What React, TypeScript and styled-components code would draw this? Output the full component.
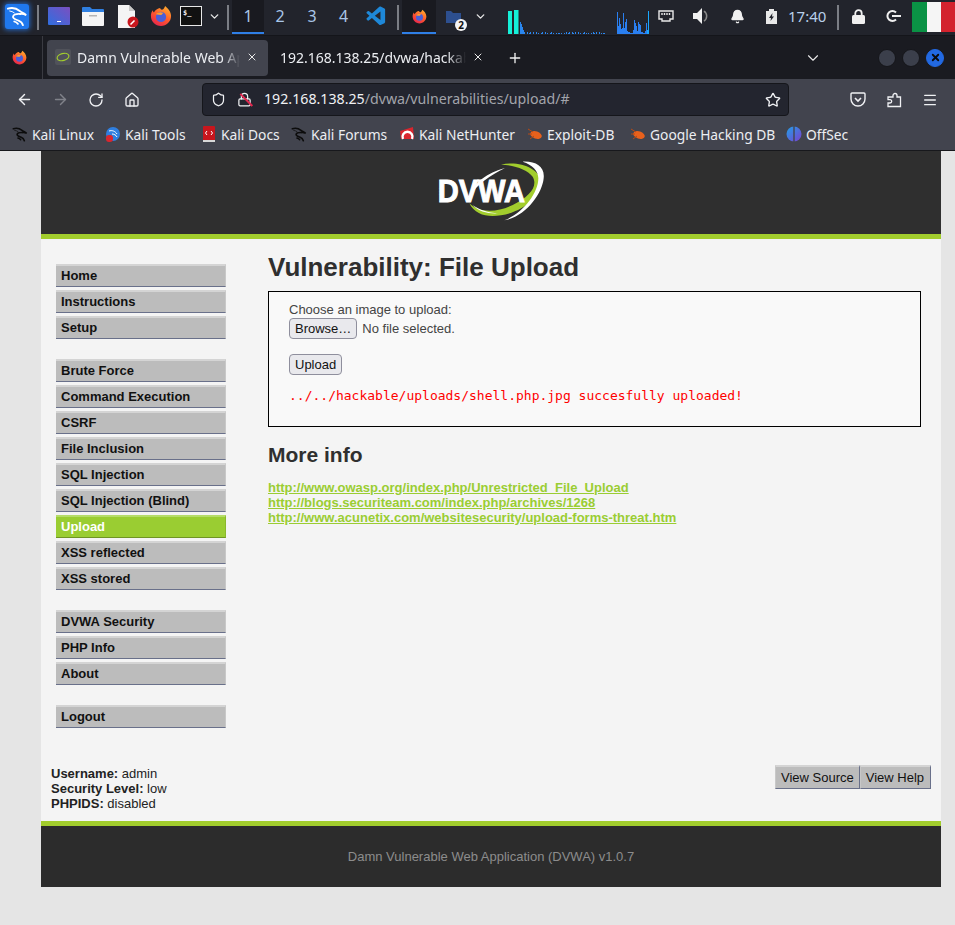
import React from "react";
import styled, { createGlobalStyle } from "styled-components";
import {
  ArrowLeft,
  ArrowRight,
  Bell,
  ChevronDown,
  Home,
  Lock,
  Menu,
  Plus,
  RotateCw,
  Shield,
  Star,
  X,
} from "lucide-react";
import { VscVscode } from "react-icons/vsc";

const GlobalStyle = createGlobalStyle`
  html, body {
    margin: 0;
    padding: 0;
    background: #e5e5e5;
  }
  * { box-sizing: border-box; }
`;

const Screen = styled.div`
  width: 955px;
  height: 925px;
  overflow: hidden;
  background: #e5e5e5;
`;

/* desktop panel */
const Panel = styled.div`
  display: flex;
  height: 36px;
  background: #22242c;
  border-bottom: 1px solid #14151a;
  color: #d8dee9;
  font-family: "Noto Sans", sans-serif;
`;

const Slot = styled.div<{ $w: number; $active?: boolean; $dark?: boolean }>`
  flex: 0 0 ${(p) => p.$w}px;
  height: 34px;
  display: flex;
  align-items: center;
  justify-content: center;
  position: relative;
  font-size: 16px;
  color: #a9c6e8;
  background: ${(p) => (p.$dark ? "#191a20" : "transparent")};
  border-bottom: ${(p) => (p.$active ? "2px solid #2f7fe6" : "2px solid transparent")};
`;

const KaliTile = styled.div`
  width: 24px;
  height: 25px;
  display: flex;
  align-items: center;
  justify-content: center;
  border-radius: 3px;
  background: #1f78ee;
  box-shadow: 0 0 5px 1px rgba(40, 130, 255, 0.7);
`;

const GraphSlot = styled.div`
  flex: 0 0 142px;
  height: 34px;
  display: flex;
  align-items: flex-end;
`;

const PanelSep = styled.div<{ $ml?: number }>`
  flex: 0 0 8px;
  margin-left: ${(p) => p.$ml ?? 0}px;
  display: flex;
  justify-content: center;
  align-items: center;
  height: 34px;
  &::after {
    content: "";
    width: 2px;
    height: 25px;
    background: #7b7e85;
  }
`;

const Clock = styled.span`
  font-size: 15px;
  color: #b9d0ea;
`;

const Badge = styled.span`
  position: absolute;
  left: 19px;
  top: 19px;
  width: 12px;
  height: 12px;
  border-radius: 50%;
  background: #f4f4f4;
  color: #111;
  font-size: 10px;
  font-weight: 700;
  line-height: 12px;
  text-align: center;
`;

const Flag = styled.div`
  flex: 0 0 43px;
  height: 30px;
  margin: 2px 0 0 0;
  display: flex;
`;

const FlagBand = styled.div<{ $c: string }>`
  flex: 1;
  background: ${(p) => p.$c};
`;

/* firefox tab strip */
const TabStrip = styled.div`
  display: flex;
  align-items: center;
  height: 43px;
  background: #1a1b21;
  color: #eceef2;
  font-family: "Noto Sans", sans-serif;
  font-size: 14px;
`;

const AppButton = styled.div`
  flex: 0 0 43px;
  height: 43px;
  display: flex;
  align-items: center;
  justify-content: center;
  padding-right: 3px;
  border-right: 1px solid #3a3b42;
`;

const Tab = styled.div<{ $active?: boolean }>`
  flex: 0 0 221px;
  min-width: 0;
  height: 36px;
  margin-left: ${(p) => (p.$active ? 4 : 0)}px;
  padding: 0 ${(p) => (p.$active ? 10 : 5)}px 1px ${(p) => (p.$active ? 8 : 12)}px;
  display: flex;
  align-items: center;
  gap: 6px;
  border-radius: 4px;
  background: ${(p) => (p.$active ? "#42444e" : "transparent")};
`;

const TabTitle = styled.span`
  flex: 1;
  min-width: 0;
  white-space: nowrap;
  overflow: hidden;
  -webkit-mask-image: linear-gradient(to right, #000 90%, transparent);
  mask-image: linear-gradient(to right, #000 90%, transparent);
`;

const Favicon = styled.div`
  flex: 0 0 16px;
  height: 16px;
  background: #50525a;
  border-radius: 2px;
  display: flex;
  align-items: center;
  justify-content: center;
`;

const NewTab = styled.div`
  margin-left: 16px;
  width: 20px;
  display: flex;
  justify-content: center;
`;

const TabList = styled.div`
  margin-left: 278px;
  width: 20px;
  display: flex;
  justify-content: center;
`;

const WindowButtons = styled.div`
  margin-left: 55px;
  display: flex;
  gap: 6px;
`;

const WindowDot = styled.div<{ $close?: boolean }>`
  width: 18px;
  height: 18px;
  border-radius: 50%;
  display: flex;
  align-items: center;
  justify-content: center;
  background: ${(p) => (p.$close ? "#2269e2" : "#3b3f4b")};
  border: 1px solid ${(p) => (p.$close ? "#2269e2" : "#15161a")};
`;

/* toolbar */
const Toolbar = styled.div`
  display: flex;
  align-items: center;
  height: 41px;
  background: #42444e;
  color: #f0f1f4;
  font-family: "Noto Sans", sans-serif;
  font-size: 14.2px;
`;

const ToolButton = styled.div<{ $w: number; $off?: boolean }>`
  flex: 0 0 ${(p) => p.$w}px;
  display: flex;
  justify-content: center;
  align-items: center;
  color: ${(p) => (p.$off ? "#80828a" : "#f0f1f4")};
`;

const UrlBar = styled.div`
  flex: 0 0 587px;
  height: 33px;
  margin: 0 51px 0 53px;
  padding: 0 7px 0 8px;
  display: flex;
  align-items: center;
  background: #23252f;
  border: 1px solid #15161b;
  border-radius: 4px;
`;

const UrlIcon = styled.div<{ $w: number }>`
  flex: 0 0 ${(p) => p.$w}px;
  display: flex;
  align-items: center;
  position: relative;
`;

const UrlText = styled.div`
  flex: 1;
  padding-bottom: 2px;
  white-space: nowrap;
  color: #f0f1f4;
  span {
    color: #a2a4ab;
  }
`;

const Strike = styled.div`
  position: absolute;
  left: 1px;
  top: 7px;
  width: 17px;
  height: 1.5px;
  background: #e22850;
  transform: rotate(45deg);
`;

/* bookmarks */
const Bookmarks = styled.div`
  display: flex;
  align-items: center;
  height: 31px;
  padding: 0 0 2px 12px;
  background: #42444e;
  color: #eceef2;
  font-family: "Noto Sans", sans-serif;
  font-size: 13.8px;
  border-bottom: 1px solid #17181c;
`;

const Bookmark = styled.div<{ $w: number }>`
  flex: 0 0 ${(p) => p.$w}px;
  display: flex;
  align-items: center;
  gap: 4px;
  white-space: nowrap;
`;

/* dvwa page */
const Page = styled.div`
  width: 900px;
  margin-left: 41px;
  font-family: "Liberation Sans", Arial, sans-serif;
  font-size: 13px;
  color: #2f2f2f;
`;

const Header = styled.div`
  height: 88px;
  padding-top: 9px;
  background: #2f2f2f;
  border-bottom: 5px solid #a2cd2d;
  display: flex;
  justify-content: center;
  align-items: flex-start;
`;

const Main = styled.div`
  height: 582px;
  padding: 14px 20px 0 15px;
  background: #f4f4f4;
`;

const Columns = styled.div`
  display: flex;
  height: 512px;
`;

const SideMenu = styled.div`
  flex: 0 0 170px;
  margin-right: 42px;
  padding-top: 11px;
`;

const MenuGroup = styled.div`
  display: flex;
  flex-direction: column;
  gap: 3px;
  margin-bottom: 20px;
`;

const MenuItem = styled.div<{ $selected?: boolean }>`
  height: 23px;
  padding-left: 5px;
  line-height: 19px;
  font-weight: 700;
  color: ${(p) => (p.$selected ? "#fff" : "#111")};
  background: ${(p) => (p.$selected ? "#9acd32" : "#bcbcbc")};
  border-top: 2px solid ${(p) => (p.$selected ? "#b5dc68" : "#d4d4d4")};
  border-right: 1px solid ${(p) => (p.$selected ? "#8ab82c" : "#c8c8c8")};
  border-bottom: 1px solid ${(p) => (p.$selected ? "#6f9424" : "#69708a")};
`;

const Content = styled.div`
  flex: 1;
`;

const Title = styled.h1`
  margin: 0 0 10px;
  font-size: 26px;
  line-height: 28px;
  font-weight: 700;
`;

const UploadBox = styled.div`
  height: 136px;
  padding: 10px 20px;
  background: #f9f9f9;
  border: 1px solid #000;
  color: #444;
`;

const BoxLabel = styled.div`
  line-height: 15px;
`;

const FileRow = styled.div`
  display: flex;
  align-items: center;
  gap: 5px;
  margin-bottom: 15px;
  height: 22px;
`;

const FormButton = styled.div`
  display: inline-flex;
  align-items: center;
  height: 21px;
  padding: 0 5px;
  color: #111;
  background: #e9e9ed;
  border: 1px solid #8f8f9d;
  border-radius: 4px;
`;

const Message = styled.pre`
  margin: 13px 0 0;
  font-family: "DejaVu Sans Mono", monospace;
  font-size: 13px;
  line-height: 15px;
  color: #f00;
`;

const SubTitle = styled.h2`
  margin: 16px 0 13px;
  font-size: 21px;
  line-height: 24px;
  font-weight: 700;
`;

const LinkList = styled.div`
  display: flex;
  flex-direction: column;
`;

const MoreLink = styled.a`
  font-weight: 700;
  line-height: 15px;
  color: #9acd32;
  text-decoration: underline;
`;

const Status = styled.div`
  display: flex;
  justify-content: space-between;
  margin-left: -5px;
  line-height: 15px;
  color: #222;
  b {
    font-weight: 700;
  }
`;

const StatusText = styled.div`
  padding-top: 1px;
`;

const SourceButtons = styled.div`
  display: flex;
  margin-right: -10px;
  height: 24px;
`;

const SourceButton = styled.div`
  height: 24px;
  padding: 0 5px;
  line-height: 21px;
  color: #111;
  background: #bcbcbc;
  border-top: 2px solid #d4d4d4;
  border-left: 1px solid #c8c8c8;
  border-right: 1px solid #69708a;
  border-bottom: 1px solid #69708a;
  &:last-child {
    padding-right: 6px;
  }
`;

const Footer = styled.div`
  height: 66px;
  padding-top: 23px;
  background: #2c2c2c;
  border-top: 5px solid #a2cd2d;
  text-align: center;
  color: #8c8c8c;
`;

/* drawn icons */
const KaliDragon: React.FC<{ size: number; color?: string; weight?: number }> = ({ size, color = "#fff", weight = 2 }) => (
  <svg width={size} height={size} viewBox="0 0 24 24" fill="none" stroke={color} strokeWidth={weight} strokeLinecap="round">
    <path d="M2 4c5-1.500 10 0 13 2.500 2 1.700 4.500 2 7 4.500-2.500-1.200-4.800-1.500-6.500-1.200" />
    <path d="M15.500 9.800c-3.500-.2-7 .3-7.800 2.700-.7 2.300 2.800 3.300 6 4.500 2.500 1 4 2.300 4.800 5" />
    <path d="M13 20.500c-1.200-1.400-2.500-2-4-2.500" />
    <path d="M4 6.500c2 .3 3.500 1 5 2" strokeWidth="1" />
  </svg>
);

const FirefoxLogo: React.FC<{ size: number }> = ({ size }) => (
  <svg width={size} height={size} viewBox="0 0 24 24">
    <defs>
      <linearGradient id="ffx" x1="0.8" y1="0" x2="0.2" y2="1">
        <stop offset="0" stopColor="#ffb02e" />
        <stop offset="0.5" stopColor="#ff5a2c" />
        <stop offset="1" stopColor="#e5214f" />
      </linearGradient>
    </defs>
    <path d="M12 23C5.800 23 1 18 1 12c0-2.500.8-4.700 2-6.300.2 1.200.7 2 1.300 2.500C5.500 5.500 8.500 3.500 11 3.300 12 6 14.500 6.200 16.500 1c3 2.500 6.500 6 6.500 11 0 6-5 11-11 11z" fill="url(#ffx)" />
    <circle cx="12" cy="13" r="5.600" fill="#4a5fd8" />
    <path d="M6.400 10c2-2 5-2.800 8.200-1.400-1 .6-1.800 1.300-2.100 2.200-1.500.2-3.500-.2-6.100-.8z" fill="#ff9a2e" />
  </svg>
);

const Graph: React.FC = () => {
  const fade = [12, 10, 7, 4, 2];
  const dots = [27, 29, 30, 33, 36, 38, 41, 42, 45, 47, 50, 51, 53, 56, 58, 59, 61, 64, 66, 68, 69, 72, 73, 75, 78, 80, 83, 84, 86, 88, 91, 93, 94, 96, 99, 101, 103, 104];
  const right = [22, 8, 16, 10, 5, 6, 21, 6, 12, 15, 3, 2, 2, 1, 1, 1, 4, 14, 11, 8, 3, 12, 10, 9, 2, 2, 1, 1, 3, 11, 4, 23];
  return (
    <svg width="142" height="24" viewBox="0 0 142 24">
      <rect x="1" y="1" width="4" height="23" fill="#14f0d8" />
      <rect x="7" y="0" width="4.500" height="24" fill="#14f0d8" />
      {fade.map((h, i) => (
        <rect key={i} x={13 + i} y={24 - h} width="1" height={h} fill="#2a86ee" />
      ))}
      {dots.map((x) => (
        <rect key={x} x={x - 7} y={x % 3 === 0 ? 22 : 23} width="1" height={x % 3 === 0 ? 2 : 1} fill="#2a86ee" />
      ))}
      {right.map((h, i) => (
        <rect key={"r" + i} x={110 + i} y={24 - h} width="1" height={h} fill={i > 29 ? "#19a8ff" : "#2a7ff0"} />
      ))}
    </svg>
  );
};

const Bug: React.FC = () => (
  <svg width="16" height="16" viewBox="0 0 16 16" fill="#e8611c">
    <ellipse cx="9" cy="9" rx="6" ry="3.600" transform="rotate(18 9 9)" />
    <path d="M1 3l5 3M1 8l4 0M3 13l4-3" stroke="#b74a15" strokeWidth="1" />
  </svg>
);

const menuGroups = [
  ["Home", "Instructions", "Setup"],
  ["Brute Force", "Command Execution", "CSRF", "File Inclusion", "SQL Injection", "SQL Injection (Blind)", "Upload", "XSS reflected", "XSS stored"],
  ["DVWA Security", "PHP Info", "About"],
  ["Logout"],
];

const links = [
  "http://www.owasp.org/index.php/Unrestricted_File_Upload",
  "http://blogs.securiteam.com/index.php/archives/1268",
  "http://www.acunetix.com/websitesecurity/upload-forms-threat.htm",
];

const App: React.FC = () => {
  return (
    <Screen>
      <GlobalStyle />
      <Panel>
        <Slot $w={34}>
          <KaliTile>
            <KaliDragon size={22} />
          </KaliTile>
        </Slot>
        <PanelSep />
        <Slot $w={34}>
          <svg width="22" height="18" viewBox="0 0 22 18">
            <defs>
              <linearGradient id="win" x1="0" y1="1" x2="1" y2="0">
                <stop offset="0" stopColor="#2f6fe0" />
                <stop offset="1" stopColor="#7b4fc0" />
              </linearGradient>
            </defs>
            <rect width="22" height="18" rx="1" fill="url(#win)" />
            <rect x="9" y="14" width="4" height="1" fill="#fff" />
          </svg>
        </Slot>
        <Slot $w={34}>
          <svg width="22" height="20" viewBox="0 0 22 20">
            <path d="M0 2a1 1 0 0 1 1-1h7l2 2h11a1 1 0 0 1 1 1v3H0z" fill="#2f7fe0" />
            <path d="M0 6h22v13a1 1 0 0 1-1 1H1a1 1 0 0 1-1-1z" fill="#f4f4f4" />
            <rect x="7" y="9" width="8" height="1.500" fill="#b4b4b4" />
          </svg>
        </Slot>
        <Slot $w={36}>
          <svg width="22" height="23" viewBox="0 0 22 23">
            <path d="M1 0h11l6 6v17H1z" fill="#f4f4f4" />
            <path d="M12 0l6 6h-6z" fill="#c8c8c8" />
            <circle cx="16" cy="17" r="5.500" fill="#c8161d" />
            <path d="M13.500 19.500l4-4" stroke="#fff" strokeWidth="1.600" />
          </svg>
        </Slot>
        <Slot $w={30}>
          <FirefoxLogo size={22} />
        </Slot>
        <Slot $w={30}>
          <svg width="22" height="20" viewBox="0 0 22 20">
            <rect x=".5" y=".5" width="21" height="19" fill="#111" stroke="#e8e8e8" />
            <text x="3" y="9" fontSize="7" fontFamily="DejaVu Sans Mono" fontWeight="700" fill="#eee">$_</text>
          </svg>
        </Slot>
        <Slot $w={16}>
          <ChevronDown size={13} color="#e8e8e8" strokeWidth={2.5} />
        </Slot>
        <PanelSep $ml={2} />
        <Slot $w={32} $active $dark>1</Slot>
        <Slot $w={32}>2</Slot>
        <Slot $w={32}>3</Slot>
        <Slot $w={31}>4</Slot>
        <Slot $w={35}>
          <VscVscode size={23} color="#1e88d8" />
        </Slot>
        <PanelSep />
        <Slot $w={34} $active $dark>
          <FirefoxLogo size={15} />
        </Slot>
        <Slot $w={34}>
          <svg width="15" height="13" viewBox="0 0 15 13" fill="#2d4f8f">
            <path d="M0 1h5l2 2h8v10H0z" />
          </svg>
          <Badge>2</Badge>
        </Slot>
        <Slot $w={20}>
          <ChevronDown size={13} color="#e8e8e8" strokeWidth={2.5} />
        </Slot>
        <Slot $w={17} />
        <GraphSlot>
          <Graph />
        </GraphSlot>
        <Slot $w={1} />
        <Slot $w={32}>
          <svg width="16" height="13" viewBox="0 0 16 13" fill="none" stroke="#e8e8e8" strokeWidth="1.400">
            <path d="M1 1h14v8h-3v2H4V9H1z" />
            <path d="M4 3v2M6.500 3v2M9 3v2M11.500 3v2" />
          </svg>
        </Slot>
        <Slot $w={4} />
        <Slot $w={32}>
          <svg width="18" height="16" viewBox="0 0 18 16">
            <path d="M0 5h4l5-5v16l-5-5H0z" fill="#f0f0f0" />
            <path d="M11 3a6 6 0 0 1 0 10" stroke="#8a8a8a" strokeWidth="1.500" fill="none" />
          </svg>
        </Slot>
        <Slot $w={2} />
        <Slot $w={34}>
          <Bell size={15} color="#f0f0f0" fill="#f0f0f0" />
        </Slot>
        <Slot $w={34}>
          <svg width="11" height="15" viewBox="0 0 11 15">
            <path d="M3 0h5v2h3v13H0V2h3z" fill="#e8e8e8" />
            <path d="M6.500 4L3 9h2l-.5 3L8 7.500H6z" fill="#22242c" />
          </svg>
        </Slot>
        <Slot $w={38}>
          <Clock>17:40</Clock>
        </Slot>
        <Slot $w={8} />
        <PanelSep />
        <Slot $w={32}>
          <svg width="13" height="15" viewBox="0 0 13 15">
            <path d="M3.300 7V4.300a3.200 3.200 0 0 1 6.400 0V7" fill="none" stroke="#f0f0f0" strokeWidth="1.800" />
            <rect y="6" width="13" height="9" rx="1.500" fill="#f0f0f0" />
          </svg>
        </Slot>
        <Slot $w={4} />
        <Slot $w={32}>
          <svg width="16" height="12" viewBox="0 0 16 12" fill="none" stroke="#f0f0f0" strokeWidth="2">
            <path d="M10 2.500A5 5 0 1 0 10 9.500M6 6h9" />
          </svg>
        </Slot>
        <Slot $w={2} />
        <Flag>
          <FlagBand $c="#0a9245" />
          <FlagBand $c="#f5f5f5" />
          <FlagBand $c="#d3232e" />
        </Flag>
      </Panel>

      <TabStrip>
        <AppButton>
          <FirefoxLogo size={15} />
        </AppButton>
        <Tab $active>
          <Favicon>
            <svg width="14" height="10" viewBox="0 0 14 10" fill="none" stroke="#a2cd2d" strokeWidth="1.200">
              <ellipse cx="7" cy="5" rx="6" ry="3.500" transform="rotate(-15 7 5)" />
            </svg>
          </Favicon>
          <TabTitle>Damn Vulnerable Web App</TabTitle>
          <X size={12} color="#e8e8e8" />
        </Tab>
        <Tab>
          <TabTitle>192.168.138.25/dvwa/hackabl</TabTitle>
          <X size={12} color="#e8e8e8" />
        </Tab>
        <NewTab>
          <Plus size={16} color="#f0f0f0" />
        </NewTab>
        <TabList>
          <ChevronDown size={18} color="#e8e8e8" strokeWidth={1.5} />
        </TabList>
        <WindowButtons>
          <WindowDot />
          <WindowDot />
          <WindowDot $close>
            <X size={11} color="#0b0b0b" strokeWidth={4} />
          </WindowDot>
        </WindowButtons>
      </TabStrip>

      <Toolbar>
        <ToolButton $w={6} />
        <ToolButton $w={36}><ArrowLeft size={17} /></ToolButton>
        <ToolButton $w={36} $off><ArrowRight size={17} /></ToolButton>
        <ToolButton $w={36}><RotateCw size={16} /></ToolButton>
        <ToolButton $w={35}><Home size={16} /></ToolButton>
        <UrlBar>
          <UrlIcon $w={26}><Shield size={15} /></UrlIcon>
          <UrlIcon $w={27}>
            <Lock size={15} />
            <Strike />
          </UrlIcon>
          <UrlText>
            192.168.138.25<span>/dvwa/vulnerabilities/upload/#</span>
          </UrlText>
          <Star size={16} />
        </UrlBar>
        <ToolButton $w={36}>
          <svg width="16" height="15" viewBox="0 0 16 15" fill="none" stroke="#f0f1f4" strokeWidth="1.400">
            <path d="M2 1h12a1 1 0 0 1 1 1v5a7 7 0 0 1-14 0V2a1 1 0 0 1 1-1z" />
            <path d="M5 6l3 3 3-3" strokeWidth="1.600" />
          </svg>
        </ToolButton>
        <ToolButton $w={36}>
          <svg width="16" height="16" viewBox="0 0 16 16" fill="none" stroke="#f0f1f4" strokeWidth="1.300">
            <path d="M7 5V3.500a2 2 0 0 1 4 0V5h3.500v9.500H2V11h2a1.700 1.700 0 0 0 0-3.400H2V5z" />
          </svg>
        </ToolButton>
        <ToolButton $w={36}><Menu size={16} /></ToolButton>
      </Toolbar>

      <Bookmarks>
        <Bookmark $w={93}><KaliDragon size={16} color="#0c0c0c" weight={2.4} />Kali Linux</Bookmark>
        <Bookmark $w={96}>
          <svg width="16" height="16" viewBox="0 0 16 16">
            <circle cx="8" cy="8" r="7" fill="#2f7fe0" />
            <path d="M4 5c3-1 6 0 8 3M7 8c2 0 4 1 5 3" stroke="#fff" fill="none" />
            <rect x="1" y="9" width="7" height="7" rx="3" fill="#d9262e" />
          </svg>
          Kali Tools
        </Bookmark>
        <Bookmark $w={90}>
          <svg width="16" height="16" viewBox="0 0 16 16">
            <rect x="2" y="0" width="12" height="15" rx="1" fill="#c8161d" />
            <rect x="2" y="14" width="12" height="2" fill="#d8d8d8" />
            <path d="M6 5L4.500 7 6 9M10 5l1.500 2L10 9" stroke="#fff" fill="none" />
          </svg>
          Kali Docs
        </Bookmark>
        <Bookmark $w={108}><KaliDragon size={16} color="#0c0c0c" weight={2.4} />Kali Forums</Bookmark>
        <Bookmark $w={128}>
          <svg width="16" height="16" viewBox="0 0 16 16">
            <path d="M1 5l13-4 1 12H2z" fill="#d9262e" />
            <path d="M4 13a5 5 0 1 1 9 0" stroke="#fff" strokeWidth="2.400" fill="none" />
          </svg>
          Kali NetHunter
        </Bookmark>
        <Bookmark $w={103}><Bug />Exploit-DB</Bookmark>
        <Bookmark $w={156}><Bug />Google Hacking DB</Bookmark>
        <Bookmark $w={70}>
          <svg width="16" height="16" viewBox="0 0 16 16">
            <defs>
              <linearGradient id="off" x1="0" y1="0" x2="1" y2="1">
                <stop offset="0" stopColor="#20a0e8" />
                <stop offset="1" stopColor="#7a3fd0" />
              </linearGradient>
            </defs>
            <circle cx="8" cy="8" r="7.500" fill="url(#off)" />
            <rect x="7.300" y="0" width="1.400" height="16" fill="#42444e" />
          </svg>
          OffSec
        </Bookmark>
      </Bookmarks>

      <Page>
        <Header>
          <svg width="110" height="70" viewBox="105 30 330 210">
            <path d="M300 44C355 32 415 55 420 95 424 135 370 185 300 196 260 203 222 195 205 160 235 190 290 188 335 165 385 140 412 110 395 80 380 60 340 45 300 44z" fill="#a2cd2d" />
            <path d="M365 35C405 33 432 50 428 85 424 130 375 200 310 211 365 190 412 130 412 85 412 62 395 45 365 35z" fill="#fff" />
            <path d="M205 140C215 100 260 68 312 54 270 75 225 105 205 140z" fill="#fff" />
            <path d="M215 165C235 180 262 188 292 190 262 192 232 185 215 165z" fill="#fff" />
            <text x="110" y="156" fontFamily="Liberation Sans" fontWeight="700" fontSize="96" fill="#fff" stroke="#fff" strokeWidth="3" textLength="262" lengthAdjust="spacingAndGlyphs">DVWA</text>
          </svg>
        </Header>
        <Main>
          <Columns>
            <SideMenu>
              {menuGroups.map((group) => (
                <MenuGroup key={group[0]}>
                  {group.map((item) => (
                    <MenuItem key={item} $selected={item === "Upload"}>{item}</MenuItem>
                  ))}
                </MenuGroup>
              ))}
            </SideMenu>
            <Content>
              <Title>Vulnerability: File Upload</Title>
              <UploadBox>
                <BoxLabel>Choose an image to upload:</BoxLabel>
                <FileRow>
                  <FormButton>Browse…</FormButton>
                  No file selected.
                </FileRow>
                <FormButton>Upload</FormButton>
                <Message>../../hackable/uploads/shell.php.jpg succesfully uploaded!</Message>
              </UploadBox>
              <SubTitle>More info</SubTitle>
              <LinkList>
                {links.map((href) => (
                  <MoreLink key={href} href={href}>{href}</MoreLink>
                ))}
              </LinkList>
            </Content>
          </Columns>
          <Status>
            <StatusText>
              <b>Username:</b> admin<br />
              <b>Security Level:</b> low<br />
              <b>PHPIDS:</b> disabled
            </StatusText>
            <SourceButtons>
              <SourceButton>View Source</SourceButton>
              <SourceButton>View Help</SourceButton>
            </SourceButtons>
          </Status>
        </Main>
        <Footer>Damn Vulnerable Web Application (DVWA) v1.0.7</Footer>
      </Page>
    </Screen>
  );
};

export default App;
